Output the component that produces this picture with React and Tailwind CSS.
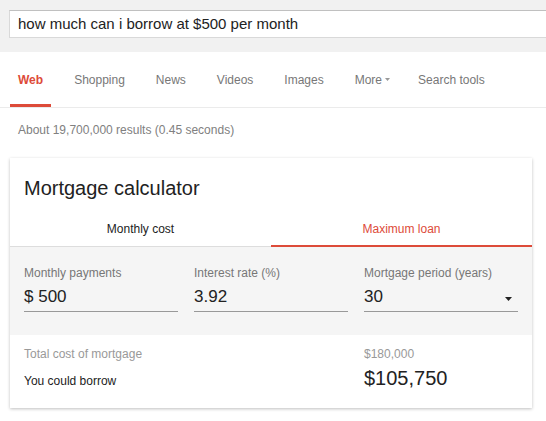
import React from "react";

const tabs = ["Shopping", "News", "Videos", "Images"];

const Field = ({ label, value, dropdown }) => (
  <div>
    <div className="text-[12px] leading-4 text-[#777]">{label}</div>
    <div className="mt-[6px] flex items-center justify-between border-b border-[#999] pb-[4px]">
      <span className="text-[17px] leading-5 text-[#222]">{value}</span>
      {dropdown && (
        <svg width="7" height="4" viewBox="0 0 7 4" className="mr-[6px] mt-[3px]">
          <path d="M0 0h7L3.5 4z" fill="#222" />
        </svg>
      )}
    </div>
  </div>
);

const App = () => {
  return (
    <div className="min-h-screen w-full overflow-hidden bg-white font-['Liberation_Sans',Arial,sans-serif]">
      {/* Search bar */}
      <div className="h-[52px] overflow-hidden bg-[#f1f1f1] pt-[10px] pl-[9px]">
        <div className="flex h-[28px] w-[545px] items-center justify-between border border-[#d9d9d9] border-t-[#c0c0c0] bg-white pl-[8px] pr-[1px]">
          <span className="text-[15px] text-[#222]">how much can i borrow at $500 per month</span>
          <svg width="6" height="4" viewBox="0 0 6 4">
            <path d="M0 0h6L3 4z" fill="#555" />
          </svg>
        </div>
      </div>

      {/* Tabs */}
      <div className="flex h-[56px] items-stretch gap-[15px] border-b border-[#ebebeb] pl-[10px] text-[12px] text-[#777]">
        <div className="flex items-center border-b-[3px] border-[#dd4b39] px-2 pt-[3px] font-bold text-[#dd4b39]">
          Web
        </div>
        {tabs.map((t) => (
          <div key={t} className="flex items-center px-2">
            {t}
          </div>
        ))}
        <div className="-mr-[3px] flex items-center gap-[3px] px-2">
          More
          <svg width="5" height="3" viewBox="0 0 5 3">
            <path d="M0 0h5L2.5 3z" fill="#999" />
          </svg>
        </div>
        <div className="flex items-center px-2">Search tools</div>
      </div>

      {/* Results count */}
      <div className="pl-[18px] pt-[14px] text-[12px] leading-4 text-[#808080]">
        About 19,700,000 results (0.45 seconds)
      </div>

      {/* Card */}
      <div className="ml-[10px] mt-[20px] w-[522px] bg-white shadow-[0_1px_3px_rgba(0,0,0,0.25)]">
        <div className="px-[14px] pt-[18px] text-[20px] leading-6 text-[#222]">Mortgage calculator</div>

        <div className="flex border-b border-[#ddd] text-[12px] leading-4">
          <div className="-mb-px flex-1 border-b-2 border-transparent pt-[21px] pb-[8px] text-center text-[#222]">
            Monthly cost
          </div>
          <div className="-mb-px flex-1 border-b-2 border-[#dd4b39] pt-[21px] pb-[8px] text-center text-[#dd4b39]">
            Maximum loan
          </div>
        </div>

        <div className="grid grid-cols-3 gap-4 bg-[#f5f5f5] px-[14px] pt-[18px] pb-[23px]">
          <Field label="Monthly payments" value="$ 500" />
          <Field label="Interest rate (%)" value="3.92" />
          <Field label="Mortgage period (years)" value="30" dropdown />
        </div>

        <div className="px-[14px] pt-[12px] pb-[18px]">
          <div className="grid grid-cols-3 gap-4 text-[12px] leading-[14px] text-[#999]">
            <div className="col-span-2">Total cost of mortgage</div>
            <div>$180,000</div>
          </div>
          <div className="mt-[5px] grid grid-cols-3 items-baseline gap-4">
            <div className="col-span-2 text-[12px] text-[#222]">You could borrow</div>
            <div className="text-[20px] leading-6 text-[#222]">$105,750</div>
          </div>
        </div>
      </div>
    </div>
  );
};

export default App;
